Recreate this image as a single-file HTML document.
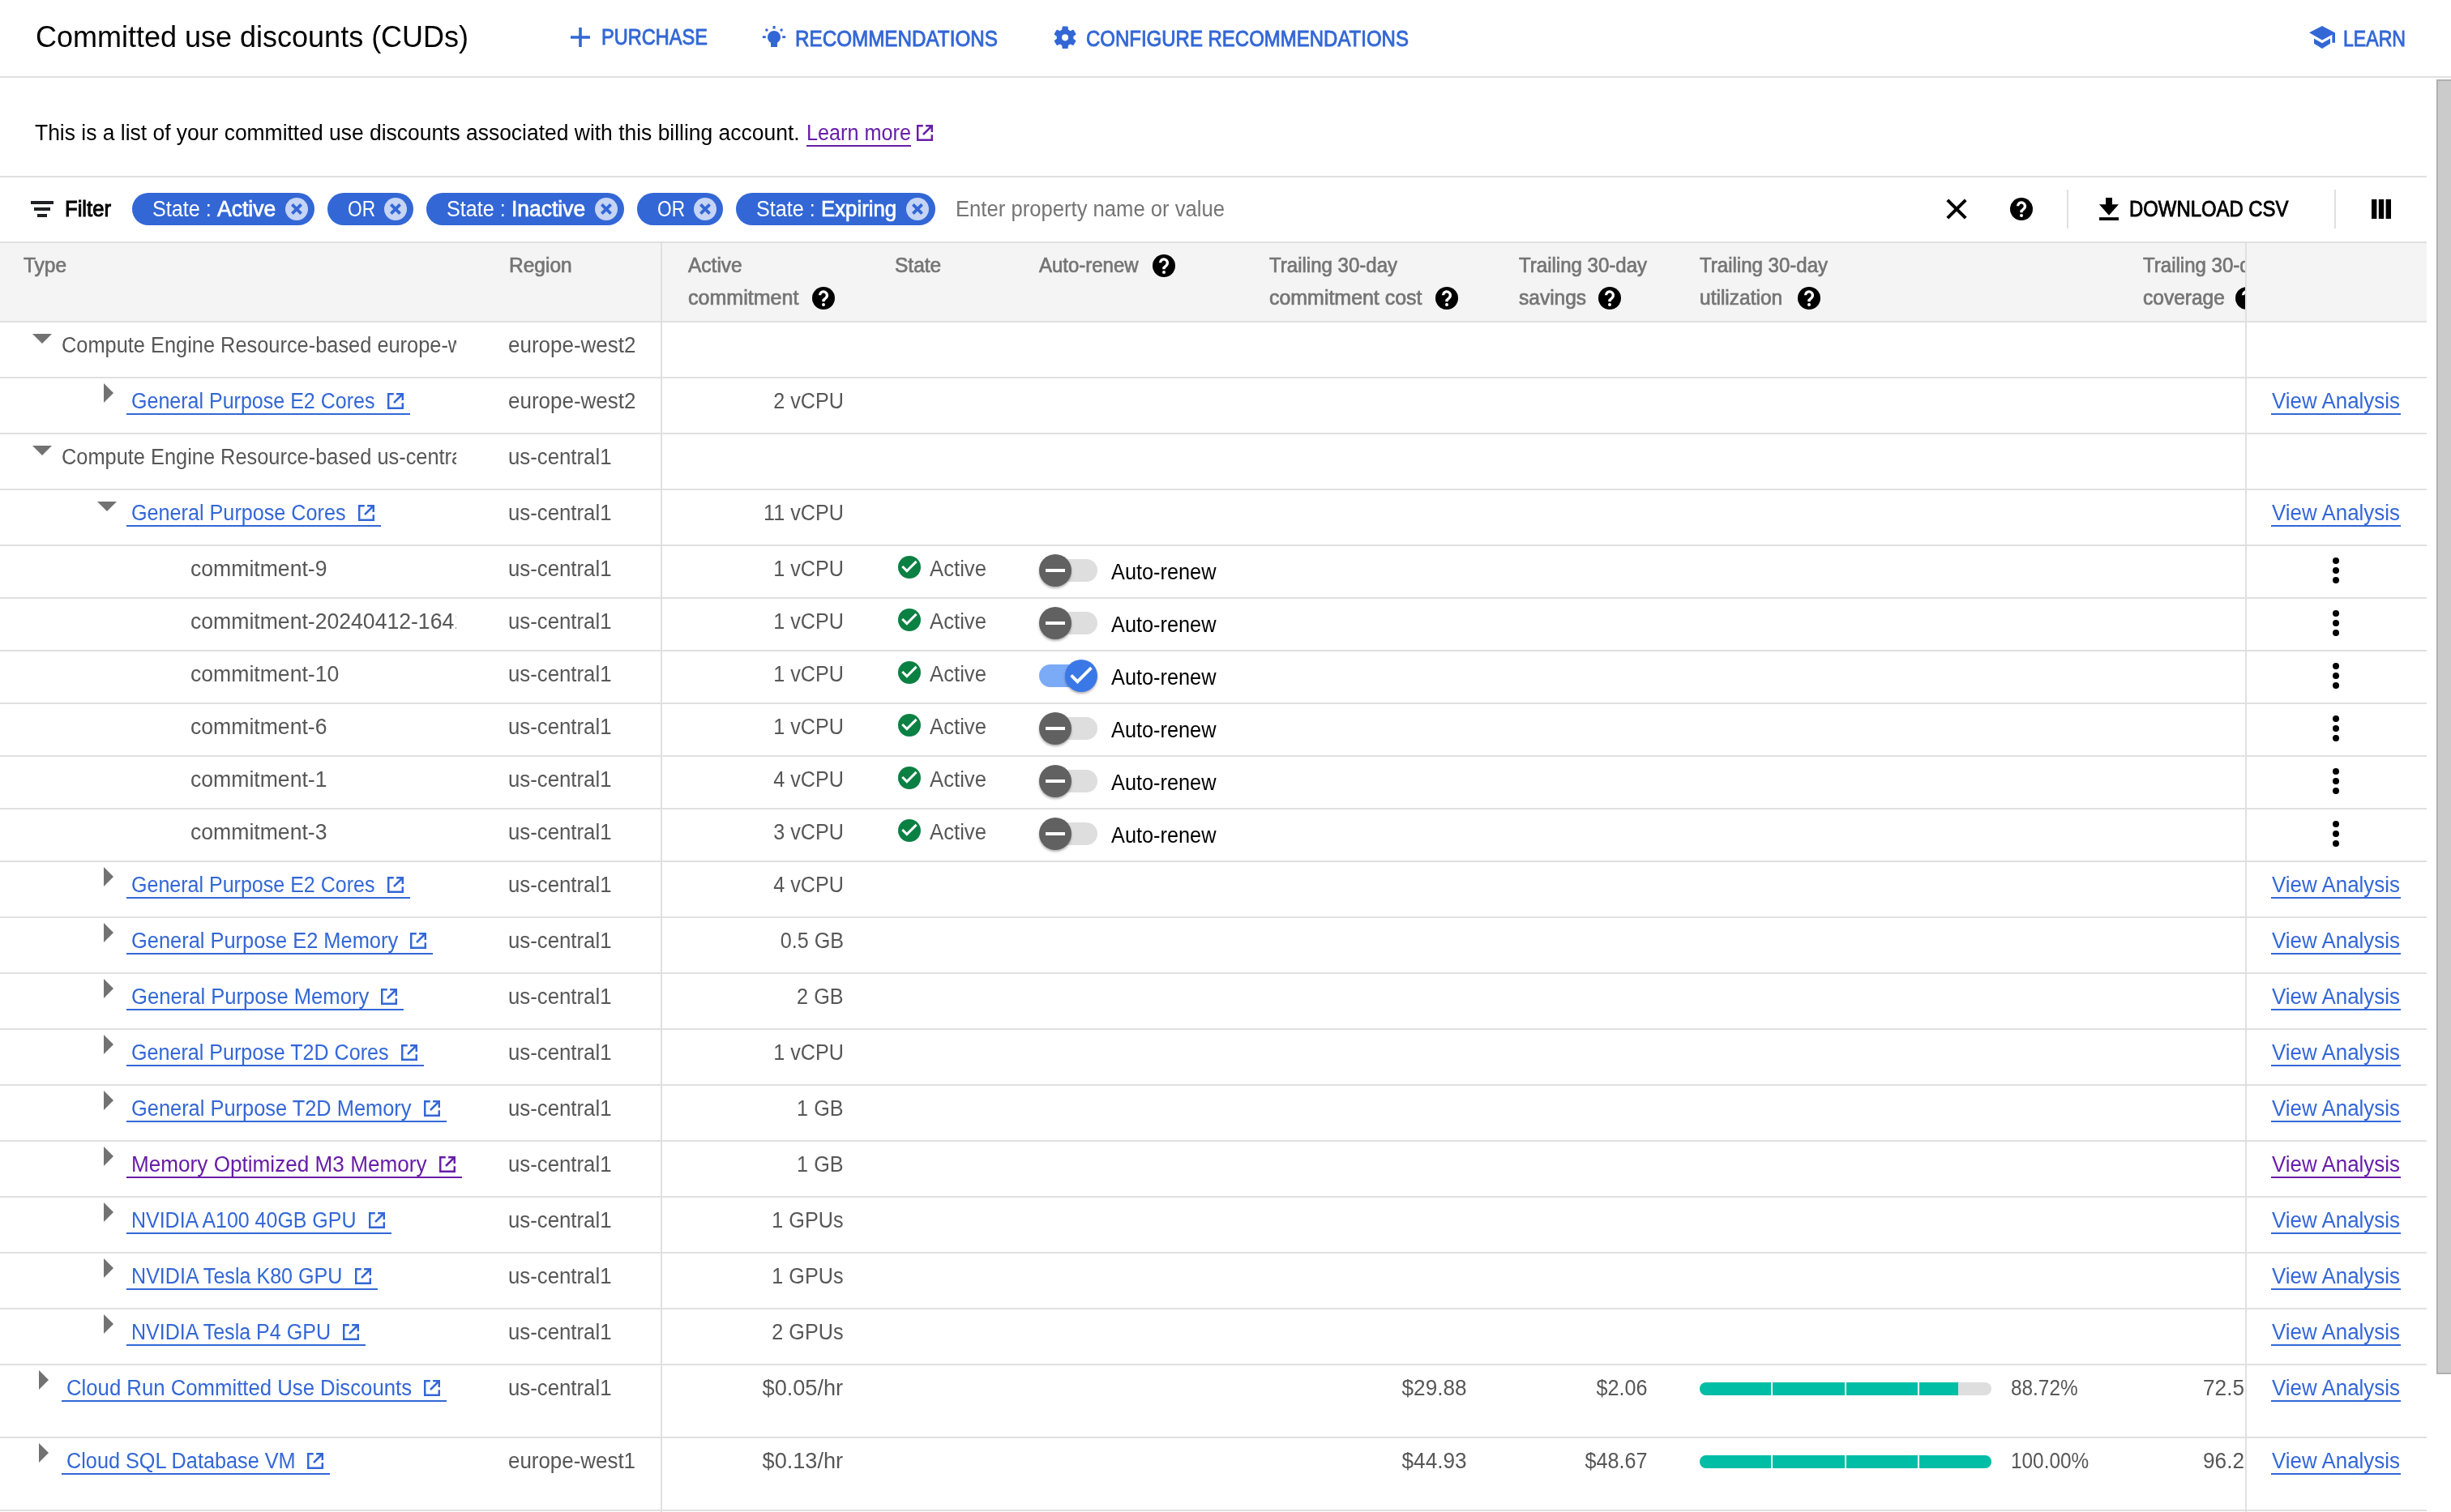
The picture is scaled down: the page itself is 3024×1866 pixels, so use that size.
<!DOCTYPE html>
<html><head><meta charset="utf-8"><style>
html,body{margin:0;padding:0;}
body{width:3024px;height:1866px;overflow:hidden;position:relative;background:#fff;font-family:"Liberation Sans",sans-serif;}
#w{position:absolute;left:0;top:0;width:3024px;height:1866px;will-change:transform;background:#fff;}
.t{position:absolute;white-space:nowrap;}
.r{position:absolute;}
svg.r{display:block;}
</style></head><body><div id="w">
<div class="t" style="left:44.00px;transform-origin:0 0;top:23.03px;font-size:36px;line-height:45.0px;color:#000000;transform:scaleX(0.9999);">Committed use discounts (CUDs)</div>
<svg class="r" style="left:704px;top:34px" width="24" height="24" viewBox="0 0 24 24"><path d="M10.2 0h3.6v10.2H24v3.6H13.8V24h-3.6V13.8H0v-3.6h10.2z" fill="#3367d6"/></svg>
<div class="t" style="left:742.00px;transform-origin:0 0;top:29.97px;font-size:27px;line-height:33.75px;color:#3367d6;-webkit-text-stroke:0.9px #3367d6;transform:scaleX(0.8730);">PURCHASE</div>
<svg class="r" style="left:940px;top:32px" width="30" height="27" viewBox="0 0 30 27"><g fill="#3367d6"><rect x="13.6" y="0" width="3" height="3.6"/><rect x="0.8" y="12.3" width="4" height="2.8"/><rect x="25.2" y="12.3" width="4" height="2.8"/><rect x="4.4" y="3.6" width="3" height="3" transform="rotate(45 5.9 5.1)"/><rect x="22.6" y="3.6" width="3" height="3" transform="rotate(45 24.1 5.1)"/><path d="M15 6A8 8 0 0 0 7 14C7 16.9 8.6 19.3 11 20.7V26H19V20.7C21.4 19.3 23 16.9 23 14A8 8 0 0 0 15 6z"/></g></svg>
<div class="t" style="left:981.40px;transform-origin:0 0;top:31.77px;font-size:27px;line-height:33.75px;color:#3367d6;-webkit-text-stroke:0.9px #3367d6;transform:scaleX(0.8972);">RECOMMENDATIONS</div>
<svg class="r" style="left:1299.8px;top:32px" width="28.2" height="28" viewBox="2.25 2 19.5 19.5"><path fill="#3367d6" d="M19.14 12.94c.04-.3.06-.61.06-.94 0-.32-.02-.64-.07-.94l2.03-1.58a.49.49 0 0 0 .12-.61l-1.92-3.32a.49.49 0 0 0-.59-.22l-2.39.96c-.5-.38-1.03-.7-1.62-.94l-.36-2.54a.48.48 0 0 0-.48-.41h-3.84c-.24 0-.43.17-.47.41l-.36 2.54c-.59.24-1.13.57-1.62.94l-2.39-.96a.48.48 0 0 0-.59.22L2.74 8.87c-.12.21-.08.47.12.61l2.03 1.58c-.05.3-.09.63-.09.94s.02.64.07.94l-2.03 1.58a.49.49 0 0 0-.12.61l1.92 3.32c.12.22.37.29.59.22l2.39-.96c.5.38 1.03.7 1.62.94l.36 2.54c.05.24.24.41.48.41h3.84c.24 0 .44-.17.47-.41l.36-2.54c.59-.24 1.13-.56 1.62-.94l2.39.96c.22.08.47 0 .59-.22l1.92-3.32c.12-.22.07-.47-.12-.61l-2.01-1.58zM12 14.8A2.8 2.8 0 1 1 12 9.2a2.8 2.8 0 0 1 0 5.6z"/></svg>
<div class="t" style="left:1339.70px;transform-origin:0 0;top:31.77px;font-size:27px;line-height:33.75px;color:#3367d6;-webkit-text-stroke:0.9px #3367d6;transform:scaleX(0.8881);">CONFIGURE RECOMMENDATIONS</div>
<svg class="r" style="left:2849px;top:32px" width="32" height="28" viewBox="0 0 32 28"><g fill="#3367d6"><path d="M0 8.3L16 0l16 8.6v12.2h-3.6V10.8L16 17.4z"/><path d="M6 15.6v6.2L16 28l10-6.2v-6.2l-10 5.7z"/></g></svg>
<div class="t" style="left:2891.00px;transform-origin:0 0;top:31.77px;font-size:27px;line-height:33.75px;color:#3367d6;-webkit-text-stroke:0.9px #3367d6;transform:scaleX(0.8551);">LEARN</div>
<div class="r" style="left:0px;top:94px;width:3024px;height:2px;background:#e0e0e0;"></div>
<div class="t" style="left:43.00px;transform-origin:0 0;top:147.77px;font-size:27px;line-height:33.75px;color:#000000;transform:scaleX(0.9794);">This is a list of your committed use discounts associated with this billing account.</div>
<div class="t" style="left:995.00px;transform-origin:0 0;top:147.77px;font-size:27px;line-height:33.75px;color:#681da8;transform:scaleX(0.9345);">Learn more</div>
<div class="r" style="left:995px;top:179px;width:129px;height:2px;background:#681da8;"></div>
<svg class="r" style="left:1131px;top:154px" width="20" height="20" viewBox="1 1 18 18"><path d="M1 1h7v2.2H3.2v13.6h13.6V12H19v7H1z M11 1h8v8h-2.2V4.8L9 12.6 7.4 11l7.8-7.8H11z" fill="#681da8"/></svg>
<div class="r" style="left:0px;top:217px;width:2994px;height:2px;background:#e0e0e0;"></div>
<svg class="r" style="left:38px;top:248px" width="28" height="20" viewBox="0 0 28 20"><g fill="#202124"><rect x="0" y="0" width="28" height="4"/><rect x="4" y="8" width="20" height="4"/><rect x="8" y="16" width="12" height="4"/></g></svg>
<div class="t" style="left:79.60px;transform-origin:0 0;top:241.77px;font-size:27px;line-height:33.75px;color:#000000;-webkit-text-stroke:1.0px #000000;transform:scaleX(0.9500);">Filter</div>
<div class="r" style="left:163px;top:238px;width:225px;height:40px;border-radius:20px;background:#3367d6"></div>
<div class="t" style="left:188.00px;transform-origin:0 0;top:241.77px;font-size:27px;line-height:33.75px;color:#fff;transform:scaleX(0.9330);">State : </div>
<div class="t" style="left:267.82px;transform-origin:0 0;top:241.77px;font-size:27px;line-height:33.75px;color:#fff;-webkit-text-stroke:0.7px #fff;transform:scaleX(0.9817);">Active</div>
<svg class="r" style="left:352px;top:244px" width="28" height="28" viewBox="0 0 28 28"><circle cx="14" cy="14" r="14" fill="#c6d4f5"/><path d="M8.4 8.4L19.6 19.6M19.6 8.4L8.4 19.6" stroke="#3367d6" stroke-width="3.8"/></svg>
<div class="r" style="left:404px;top:238px;width:106px;height:40px;border-radius:20px;background:#3367d6"></div>
<div class="t" style="left:429.00px;transform-origin:0 0;top:241.77px;font-size:27px;line-height:33.75px;color:#fff;transform:scaleX(0.8395);">OR</div>
<svg class="r" style="left:474px;top:244px" width="28" height="28" viewBox="0 0 28 28"><circle cx="14" cy="14" r="14" fill="#c6d4f5"/><path d="M8.4 8.4L19.6 19.6M19.6 8.4L8.4 19.6" stroke="#3367d6" stroke-width="3.8"/></svg>
<div class="r" style="left:526px;top:238px;width:244px;height:40px;border-radius:20px;background:#3367d6"></div>
<div class="t" style="left:551.00px;transform-origin:0 0;top:241.77px;font-size:27px;line-height:33.75px;color:#fff;transform:scaleX(0.9330);">State : </div>
<div class="t" style="left:630.82px;transform-origin:0 0;top:241.77px;font-size:27px;line-height:33.75px;color:#fff;-webkit-text-stroke:0.7px #fff;transform:scaleX(0.9800);">Inactive</div>
<svg class="r" style="left:734px;top:244px" width="28" height="28" viewBox="0 0 28 28"><circle cx="14" cy="14" r="14" fill="#c6d4f5"/><path d="M8.4 8.4L19.6 19.6M19.6 8.4L8.4 19.6" stroke="#3367d6" stroke-width="3.8"/></svg>
<div class="r" style="left:786px;top:238px;width:106px;height:40px;border-radius:20px;background:#3367d6"></div>
<div class="t" style="left:811.00px;transform-origin:0 0;top:241.77px;font-size:27px;line-height:33.75px;color:#fff;transform:scaleX(0.8395);">OR</div>
<svg class="r" style="left:856px;top:244px" width="28" height="28" viewBox="0 0 28 28"><circle cx="14" cy="14" r="14" fill="#c6d4f5"/><path d="M8.4 8.4L19.6 19.6M19.6 8.4L8.4 19.6" stroke="#3367d6" stroke-width="3.8"/></svg>
<div class="r" style="left:908px;top:238px;width:246px;height:40px;border-radius:20px;background:#3367d6"></div>
<div class="t" style="left:933.00px;transform-origin:0 0;top:241.77px;font-size:27px;line-height:33.75px;color:#fff;transform:scaleX(0.9330);">State : </div>
<div class="t" style="left:1012.82px;transform-origin:0 0;top:241.77px;font-size:27px;line-height:33.75px;color:#fff;-webkit-text-stroke:0.7px #fff;transform:scaleX(0.9553);">Expiring</div>
<svg class="r" style="left:1118px;top:244px" width="28" height="28" viewBox="0 0 28 28"><circle cx="14" cy="14" r="14" fill="#c6d4f5"/><path d="M8.4 8.4L19.6 19.6M19.6 8.4L8.4 19.6" stroke="#3367d6" stroke-width="3.8"/></svg>
<div class="t" style="left:1178.70px;transform-origin:0 0;top:241.77px;font-size:27px;line-height:33.75px;color:#757575;transform:scaleX(0.9495);">Enter property name or value</div>
<svg class="r" style="left:2401px;top:245px" width="26" height="26" viewBox="0 0 26 26"><path d="M1.8 1.8L24.2 24.2M24.2 1.8L1.8 24.2" stroke="#000" stroke-width="4"/></svg>
<svg class="r" style="left:2480px;top:244px" width="28" height="28" viewBox="0 0 28 28"><circle cx="14" cy="14" r="14" fill="#000"/><path d="M9.5 10.3A4.45 4.45 0 1 1 17.2 13.4L14 16.5V18.3" stroke="#fff" stroke-width="3.4" fill="none"/><circle cx="14" cy="22.1" r="2" fill="#fff"/></svg>
<div class="r" style="left:2550px;top:234px;width:2px;height:48px;background:#e0e0e0;"></div>
<svg class="r" style="left:2590px;top:244px" width="24" height="28" viewBox="0 0 24 28"><g fill="#000"><path d="M8 0h8v8.2H24L12 21.8 0 8.2h8z"/><rect x="0" y="24.2" width="24" height="3.8"/></g></svg>
<div class="t" style="left:2627.00px;transform-origin:0 0;top:242.27px;font-size:27px;line-height:33.75px;color:#000000;-webkit-text-stroke:0.9px #000000;transform:scaleX(0.8849);">DOWNLOAD CSV</div>
<div class="r" style="left:2880px;top:234px;width:2px;height:48px;background:#e0e0e0;"></div>
<svg class="r" style="left:2926px;top:246px" width="24" height="24" viewBox="0 0 24 24"><g fill="#000"><rect x="0" y="0" width="6.4" height="24"/><rect x="8.8" y="0" width="6.4" height="24"/><rect x="17.6" y="0" width="6.4" height="24"/></g></svg>
<div class="r" style="left:0px;top:298px;width:2994px;height:2px;background:#e0e0e0;"></div>
<div class="r" style="left:0px;top:300px;width:2994px;height:96px;background:#f4f4f4;"></div>
<div class="r" style="left:0px;top:396px;width:2994px;height:2px;background:#e0e0e0;"></div>
<div class="t" style="left:28.70px;transform-origin:0 0;top:311.71px;font-size:25px;line-height:31.25px;color:#757575;-webkit-text-stroke:0.7px #757575;transform:scaleX(0.9800);">Type</div>
<div class="t" style="left:628.00px;transform-origin:0 0;top:311.71px;font-size:25px;line-height:31.25px;color:#757575;-webkit-text-stroke:0.7px #757575;transform:scaleX(0.9800);">Region</div>
<div class="t" style="left:849.00px;transform-origin:0 0;top:311.71px;font-size:25px;line-height:31.25px;color:#757575;-webkit-text-stroke:0.7px #757575;transform:scaleX(0.9798);">Active</div>
<div class="t" style="left:849.00px;transform-origin:0 0;top:351.71px;font-size:25px;line-height:31.25px;color:#757575;-webkit-text-stroke:0.7px #757575;transform:scaleX(1.0018);">commitment</div>
<svg class="r" style="left:1002px;top:354px" width="28" height="28" viewBox="0 0 28 28"><circle cx="14" cy="14" r="14" fill="#000"/><path d="M9.5 10.3A4.45 4.45 0 1 1 17.2 13.4L14 16.5V18.3" stroke="#fff" stroke-width="3.4" fill="none"/><circle cx="14" cy="22.1" r="2" fill="#fff"/></svg>
<div class="t" style="left:1104.00px;transform-origin:0 0;top:311.71px;font-size:25px;line-height:31.25px;color:#757575;-webkit-text-stroke:0.7px #757575;transform:scaleX(0.9800);">State</div>
<div class="t" style="left:1282.00px;transform-origin:0 0;top:311.71px;font-size:25px;line-height:31.25px;color:#757575;-webkit-text-stroke:0.7px #757575;transform:scaleX(0.9589);">Auto-renew</div>
<svg class="r" style="left:1422px;top:314px" width="28" height="28" viewBox="0 0 28 28"><circle cx="14" cy="14" r="14" fill="#000"/><path d="M9.5 10.3A4.45 4.45 0 1 1 17.2 13.4L14 16.5V18.3" stroke="#fff" stroke-width="3.4" fill="none"/><circle cx="14" cy="22.1" r="2" fill="#fff"/></svg>
<div class="t" style="left:1566.00px;transform-origin:0 0;top:311.71px;font-size:25px;line-height:31.25px;color:#757575;-webkit-text-stroke:0.7px #757575;transform:scaleX(0.9609);">Trailing 30-day</div>
<div class="t" style="left:1566.00px;transform-origin:0 0;top:351.71px;font-size:25px;line-height:31.25px;color:#757575;-webkit-text-stroke:0.7px #757575;transform:scaleX(0.9975);">commitment cost</div>
<svg class="r" style="left:1771px;top:354px" width="28" height="28" viewBox="0 0 28 28"><circle cx="14" cy="14" r="14" fill="#000"/><path d="M9.5 10.3A4.45 4.45 0 1 1 17.2 13.4L14 16.5V18.3" stroke="#fff" stroke-width="3.4" fill="none"/><circle cx="14" cy="22.1" r="2" fill="#fff"/></svg>
<div class="t" style="left:1874.00px;transform-origin:0 0;top:311.71px;font-size:25px;line-height:31.25px;color:#757575;-webkit-text-stroke:0.7px #757575;transform:scaleX(0.9609);">Trailing 30-day</div>
<div class="t" style="left:1874.00px;transform-origin:0 0;top:351.71px;font-size:25px;line-height:31.25px;color:#757575;-webkit-text-stroke:0.7px #757575;transform:scaleX(0.9800);">savings</div>
<svg class="r" style="left:1972px;top:354px" width="28" height="28" viewBox="0 0 28 28"><circle cx="14" cy="14" r="14" fill="#000"/><path d="M9.5 10.3A4.45 4.45 0 1 1 17.2 13.4L14 16.5V18.3" stroke="#fff" stroke-width="3.4" fill="none"/><circle cx="14" cy="22.1" r="2" fill="#fff"/></svg>
<div class="t" style="left:2097.00px;transform-origin:0 0;top:311.71px;font-size:25px;line-height:31.25px;color:#757575;-webkit-text-stroke:0.7px #757575;transform:scaleX(0.9609);">Trailing 30-day</div>
<div class="t" style="left:2097.00px;transform-origin:0 0;top:351.71px;font-size:25px;line-height:31.25px;color:#757575;-webkit-text-stroke:0.7px #757575;transform:scaleX(0.9800);">utilization</div>
<svg class="r" style="left:2218px;top:354px" width="28" height="28" viewBox="0 0 28 28"><circle cx="14" cy="14" r="14" fill="#000"/><path d="M9.5 10.3A4.45 4.45 0 1 1 17.2 13.4L14 16.5V18.3" stroke="#fff" stroke-width="3.4" fill="none"/><circle cx="14" cy="22.1" r="2" fill="#fff"/></svg>
<div class="r" style="left:2600px;top:300px;width:170px;height:96px;overflow:hidden">
<div class="t" style="left:44.00px;transform-origin:0 0;top:11.71px;font-size:25px;line-height:31.25px;color:#757575;-webkit-text-stroke:0.7px #757575;transform:scaleX(0.9609);">Trailing 30-day</div>
<div class="t" style="left:44.00px;transform-origin:0 0;top:51.71px;font-size:25px;line-height:31.25px;color:#757575;-webkit-text-stroke:0.7px #757575;transform:scaleX(0.9800);">coverage</div>
<svg class="r" style="left:158px;top:54px" width="28" height="28" viewBox="0 0 28 28"><circle cx="14" cy="14" r="14" fill="#000"/><path d="M9.5 10.3A4.45 4.45 0 1 1 17.2 13.4L14 16.5V18.3" stroke="#fff" stroke-width="3.4" fill="none"/><circle cx="14" cy="22.1" r="2" fill="#fff"/></svg>
</div>
<div class="r" style="left:0px;top:465px;width:2994px;height:2px;background:#e0e0e0;"></div>
<div class="r" style="left:0px;top:534px;width:2994px;height:2px;background:#e0e0e0;"></div>
<div class="r" style="left:0px;top:603px;width:2994px;height:2px;background:#e0e0e0;"></div>
<div class="r" style="left:0px;top:672px;width:2994px;height:2px;background:#e0e0e0;"></div>
<div class="r" style="left:0px;top:737px;width:2994px;height:2px;background:#e0e0e0;"></div>
<div class="r" style="left:0px;top:802px;width:2994px;height:2px;background:#e0e0e0;"></div>
<div class="r" style="left:0px;top:867px;width:2994px;height:2px;background:#e0e0e0;"></div>
<div class="r" style="left:0px;top:932px;width:2994px;height:2px;background:#e0e0e0;"></div>
<div class="r" style="left:0px;top:997px;width:2994px;height:2px;background:#e0e0e0;"></div>
<div class="r" style="left:0px;top:1062px;width:2994px;height:2px;background:#e0e0e0;"></div>
<div class="r" style="left:0px;top:1131px;width:2994px;height:2px;background:#e0e0e0;"></div>
<div class="r" style="left:0px;top:1200px;width:2994px;height:2px;background:#e0e0e0;"></div>
<div class="r" style="left:0px;top:1269px;width:2994px;height:2px;background:#e0e0e0;"></div>
<div class="r" style="left:0px;top:1338px;width:2994px;height:2px;background:#e0e0e0;"></div>
<div class="r" style="left:0px;top:1407px;width:2994px;height:2px;background:#e0e0e0;"></div>
<div class="r" style="left:0px;top:1476px;width:2994px;height:2px;background:#e0e0e0;"></div>
<div class="r" style="left:0px;top:1545px;width:2994px;height:2px;background:#e0e0e0;"></div>
<div class="r" style="left:0px;top:1614px;width:2994px;height:2px;background:#e0e0e0;"></div>
<div class="r" style="left:0px;top:1683px;width:2994px;height:2px;background:#e0e0e0;"></div>
<div class="r" style="left:0px;top:1773px;width:2994px;height:2px;background:#e0e0e0;"></div>
<div class="r" style="left:0px;top:1863px;width:2994px;height:2px;background:#e0e0e0;"></div>
<svg class="r" style="left:40px;top:412px" width="24" height="12" viewBox="0 0 24 12"><path d="M0 0h24L12 12z" fill="#727272"/></svg>
<div class="r" style="left:60px;top:396px;width:503px;height:60px;overflow:hidden">
<div class="t" style="left:15.50px;transform-origin:0 0;top:13.77px;font-size:27px;line-height:33.75px;color:#575757;transform:scaleX(0.9400);">Compute Engine Resource-based europe-west2</div>
</div>
<div class="t" style="left:627.30px;transform-origin:0 0;top:409.77px;font-size:27px;line-height:33.75px;color:#575757;transform:scaleX(0.9628);">europe-west2</div>
<svg class="r" style="left:128px;top:473px" width="12" height="24" viewBox="0 0 12 24"><path d="M0 0l12 12L0 24z" fill="#727272"/></svg>
<div class="t" style="left:162.00px;transform-origin:0 0;top:478.77px;font-size:27px;line-height:33.75px;color:#3367d6;transform:scaleX(0.9270);">General Purpose E2 Cores</div>
<svg class="r" style="left:477.7px;top:485px" width="20" height="20" viewBox="1 1 18 18"><path d="M1 1h7v2.2H3.2v13.6h13.6V12H19v7H1z M11 1h8v8h-2.2V4.8L9 12.6 7.4 11l7.8-7.8H11z" fill="#3367d6"/></svg>
<div class="r" style="left:156px;top:510px;width:349.7px;height:2px;background:#3367d6;"></div>
<div class="t" style="left:627.30px;transform-origin:0 0;top:478.77px;font-size:27px;line-height:33.75px;color:#575757;transform:scaleX(0.9628);">europe-west2</div>
<div class="t" style="right:1983.00px;transform-origin:100% 0;top:478.77px;font-size:27px;line-height:33.75px;color:#575757;transform:scaleX(0.9330);">2 vCPU</div>
<div class="t" style="left:2803.00px;transform-origin:0 0;top:478.77px;font-size:27px;line-height:33.75px;color:#3367d6;transform:scaleX(0.9598);">View Analysis</div>
<div class="r" style="left:2802px;top:510px;width:160px;height:2px;background:#3367d6;"></div>
<svg class="r" style="left:40px;top:550px" width="24" height="12" viewBox="0 0 24 12"><path d="M0 0h24L12 12z" fill="#727272"/></svg>
<div class="r" style="left:60px;top:534px;width:503px;height:60px;overflow:hidden">
<div class="t" style="left:15.50px;transform-origin:0 0;top:13.77px;font-size:27px;line-height:33.75px;color:#575757;transform:scaleX(0.9400);">Compute Engine Resource-based us-central1</div>
</div>
<div class="t" style="left:627.30px;transform-origin:0 0;top:547.77px;font-size:27px;line-height:33.75px;color:#575757;transform:scaleX(0.9547);">us-central1</div>
<svg class="r" style="left:120px;top:619px" width="24" height="12" viewBox="0 0 24 12"><path d="M0 0h24L12 12z" fill="#727272"/></svg>
<div class="t" style="left:162.00px;transform-origin:0 0;top:616.77px;font-size:27px;line-height:33.75px;color:#3367d6;transform:scaleX(0.9326);">General Purpose Cores</div>
<svg class="r" style="left:441.7px;top:623px" width="20" height="20" viewBox="1 1 18 18"><path d="M1 1h7v2.2H3.2v13.6h13.6V12H19v7H1z M11 1h8v8h-2.2V4.8L9 12.6 7.4 11l7.8-7.8H11z" fill="#3367d6"/></svg>
<div class="r" style="left:156px;top:648px;width:313.7px;height:2px;background:#3367d6;"></div>
<div class="t" style="left:627.30px;transform-origin:0 0;top:616.77px;font-size:27px;line-height:33.75px;color:#575757;transform:scaleX(0.9547);">us-central1</div>
<div class="t" style="right:1983.00px;transform-origin:100% 0;top:616.77px;font-size:27px;line-height:33.75px;color:#575757;transform:scaleX(0.9330);">11 vCPU</div>
<div class="t" style="left:2803.00px;transform-origin:0 0;top:616.77px;font-size:27px;line-height:33.75px;color:#3367d6;transform:scaleX(0.9598);">View Analysis</div>
<div class="r" style="left:2802px;top:648px;width:160px;height:2px;background:#3367d6;"></div>
<div class="r" style="left:200px;top:672px;width:363px;height:60px;overflow:hidden">
<div class="t" style="left:35.00px;transform-origin:0 0;top:13.77px;font-size:27px;line-height:33.75px;color:#575757;transform:scaleX(0.9850);">commitment-9</div>
</div>
<div class="t" style="left:627.30px;transform-origin:0 0;top:685.77px;font-size:27px;line-height:33.75px;color:#575757;transform:scaleX(0.9547);">us-central1</div>
<div class="t" style="right:1983.00px;transform-origin:100% 0;top:685.77px;font-size:27px;line-height:33.75px;color:#575757;transform:scaleX(0.9330);">1 vCPU</div>
<svg class="r" style="left:1108px;top:686px" width="28" height="28" viewBox="0 0 28 28"><circle cx="14" cy="14" r="14" fill="#0b8043"/><path d="M5.3 13L10.9 18.6L22.6 6.9" stroke="#fff" stroke-width="3" fill="none"/></svg>
<div class="t" style="left:1147.00px;transform-origin:0 0;top:685.57px;font-size:27px;line-height:33.75px;color:#575757;transform:scaleX(0.9520);">Active</div>
<div class="r" style="left:1286px;top:690px;width:68px;height:28px;background:#dedede;border-radius:14px;"></div>
<div class="r" style="left:1282px;top:684px;width:40px;height:40px;border-radius:20px;background:#616161;box-shadow:0 2px 3px rgba(0,0,0,.3)"></div>
<div class="r" style="left:1290px;top:702px;width:24px;height:4px;background:#fff;"></div>
<div class="t" style="left:1371.00px;transform-origin:0 0;top:689.77px;font-size:27px;line-height:33.75px;color:#000000;transform:scaleX(0.9373);">Auto-renew</div>
<div class="r" style="left:2878px;top:688px;width:8px;height:8px;border-radius:4px;background:#000"></div>
<div class="r" style="left:2878px;top:700px;width:8px;height:8px;border-radius:4px;background:#000"></div>
<div class="r" style="left:2878px;top:712px;width:8px;height:8px;border-radius:4px;background:#000"></div>
<div class="r" style="left:200px;top:737px;width:363px;height:60px;overflow:hidden">
<div class="t" style="left:35.00px;transform-origin:0 0;top:13.77px;font-size:27px;line-height:33.75px;color:#575757;transform:scaleX(0.9850);">commitment-20240412-164129</div>
</div>
<div class="t" style="left:627.30px;transform-origin:0 0;top:750.77px;font-size:27px;line-height:33.75px;color:#575757;transform:scaleX(0.9547);">us-central1</div>
<div class="t" style="right:1983.00px;transform-origin:100% 0;top:750.77px;font-size:27px;line-height:33.75px;color:#575757;transform:scaleX(0.9330);">1 vCPU</div>
<svg class="r" style="left:1108px;top:751px" width="28" height="28" viewBox="0 0 28 28"><circle cx="14" cy="14" r="14" fill="#0b8043"/><path d="M5.3 13L10.9 18.6L22.6 6.9" stroke="#fff" stroke-width="3" fill="none"/></svg>
<div class="t" style="left:1147.00px;transform-origin:0 0;top:750.57px;font-size:27px;line-height:33.75px;color:#575757;transform:scaleX(0.9520);">Active</div>
<div class="r" style="left:1286px;top:755px;width:68px;height:28px;background:#dedede;border-radius:14px;"></div>
<div class="r" style="left:1282px;top:749px;width:40px;height:40px;border-radius:20px;background:#616161;box-shadow:0 2px 3px rgba(0,0,0,.3)"></div>
<div class="r" style="left:1290px;top:767px;width:24px;height:4px;background:#fff;"></div>
<div class="t" style="left:1371.00px;transform-origin:0 0;top:754.77px;font-size:27px;line-height:33.75px;color:#000000;transform:scaleX(0.9373);">Auto-renew</div>
<div class="r" style="left:2878px;top:753px;width:8px;height:8px;border-radius:4px;background:#000"></div>
<div class="r" style="left:2878px;top:765px;width:8px;height:8px;border-radius:4px;background:#000"></div>
<div class="r" style="left:2878px;top:777px;width:8px;height:8px;border-radius:4px;background:#000"></div>
<div class="r" style="left:200px;top:802px;width:363px;height:60px;overflow:hidden">
<div class="t" style="left:35.00px;transform-origin:0 0;top:13.77px;font-size:27px;line-height:33.75px;color:#575757;transform:scaleX(0.9850);">commitment-10</div>
</div>
<div class="t" style="left:627.30px;transform-origin:0 0;top:815.77px;font-size:27px;line-height:33.75px;color:#575757;transform:scaleX(0.9547);">us-central1</div>
<div class="t" style="right:1983.00px;transform-origin:100% 0;top:815.77px;font-size:27px;line-height:33.75px;color:#575757;transform:scaleX(0.9330);">1 vCPU</div>
<svg class="r" style="left:1108px;top:816px" width="28" height="28" viewBox="0 0 28 28"><circle cx="14" cy="14" r="14" fill="#0b8043"/><path d="M5.3 13L10.9 18.6L22.6 6.9" stroke="#fff" stroke-width="3" fill="none"/></svg>
<div class="t" style="left:1147.00px;transform-origin:0 0;top:815.57px;font-size:27px;line-height:33.75px;color:#575757;transform:scaleX(0.9520);">Active</div>
<div class="r" style="left:1282px;top:820px;width:68px;height:28px;background:#7baaf7;border-radius:14px;"></div>
<div class="r" style="left:1314px;top:814px;width:40px;height:40px;border-radius:20px;background:#3b78e7;box-shadow:0 2px 3px rgba(0,0,0,.3)"></div>
<svg class="r" style="left:1314px;top:814px" width="40" height="40" viewBox="0 0 40 40"><path d="M7.6 19.4L15.4 27.2L32.4 10.2" stroke="#fff" stroke-width="3.8" fill="none"/></svg>
<div class="t" style="left:1371.00px;transform-origin:0 0;top:819.77px;font-size:27px;line-height:33.75px;color:#000000;transform:scaleX(0.9373);">Auto-renew</div>
<div class="r" style="left:2878px;top:818px;width:8px;height:8px;border-radius:4px;background:#000"></div>
<div class="r" style="left:2878px;top:830px;width:8px;height:8px;border-radius:4px;background:#000"></div>
<div class="r" style="left:2878px;top:842px;width:8px;height:8px;border-radius:4px;background:#000"></div>
<div class="r" style="left:200px;top:867px;width:363px;height:60px;overflow:hidden">
<div class="t" style="left:35.00px;transform-origin:0 0;top:13.77px;font-size:27px;line-height:33.75px;color:#575757;transform:scaleX(0.9850);">commitment-6</div>
</div>
<div class="t" style="left:627.30px;transform-origin:0 0;top:880.77px;font-size:27px;line-height:33.75px;color:#575757;transform:scaleX(0.9547);">us-central1</div>
<div class="t" style="right:1983.00px;transform-origin:100% 0;top:880.77px;font-size:27px;line-height:33.75px;color:#575757;transform:scaleX(0.9330);">1 vCPU</div>
<svg class="r" style="left:1108px;top:881px" width="28" height="28" viewBox="0 0 28 28"><circle cx="14" cy="14" r="14" fill="#0b8043"/><path d="M5.3 13L10.9 18.6L22.6 6.9" stroke="#fff" stroke-width="3" fill="none"/></svg>
<div class="t" style="left:1147.00px;transform-origin:0 0;top:880.57px;font-size:27px;line-height:33.75px;color:#575757;transform:scaleX(0.9520);">Active</div>
<div class="r" style="left:1286px;top:885px;width:68px;height:28px;background:#dedede;border-radius:14px;"></div>
<div class="r" style="left:1282px;top:879px;width:40px;height:40px;border-radius:20px;background:#616161;box-shadow:0 2px 3px rgba(0,0,0,.3)"></div>
<div class="r" style="left:1290px;top:897px;width:24px;height:4px;background:#fff;"></div>
<div class="t" style="left:1371.00px;transform-origin:0 0;top:884.77px;font-size:27px;line-height:33.75px;color:#000000;transform:scaleX(0.9373);">Auto-renew</div>
<div class="r" style="left:2878px;top:883px;width:8px;height:8px;border-radius:4px;background:#000"></div>
<div class="r" style="left:2878px;top:895px;width:8px;height:8px;border-radius:4px;background:#000"></div>
<div class="r" style="left:2878px;top:907px;width:8px;height:8px;border-radius:4px;background:#000"></div>
<div class="r" style="left:200px;top:932px;width:363px;height:60px;overflow:hidden">
<div class="t" style="left:35.00px;transform-origin:0 0;top:13.77px;font-size:27px;line-height:33.75px;color:#575757;transform:scaleX(0.9850);">commitment-1</div>
</div>
<div class="t" style="left:627.30px;transform-origin:0 0;top:945.77px;font-size:27px;line-height:33.75px;color:#575757;transform:scaleX(0.9547);">us-central1</div>
<div class="t" style="right:1983.00px;transform-origin:100% 0;top:945.77px;font-size:27px;line-height:33.75px;color:#575757;transform:scaleX(0.9330);">4 vCPU</div>
<svg class="r" style="left:1108px;top:946px" width="28" height="28" viewBox="0 0 28 28"><circle cx="14" cy="14" r="14" fill="#0b8043"/><path d="M5.3 13L10.9 18.6L22.6 6.9" stroke="#fff" stroke-width="3" fill="none"/></svg>
<div class="t" style="left:1147.00px;transform-origin:0 0;top:945.57px;font-size:27px;line-height:33.75px;color:#575757;transform:scaleX(0.9520);">Active</div>
<div class="r" style="left:1286px;top:950px;width:68px;height:28px;background:#dedede;border-radius:14px;"></div>
<div class="r" style="left:1282px;top:944px;width:40px;height:40px;border-radius:20px;background:#616161;box-shadow:0 2px 3px rgba(0,0,0,.3)"></div>
<div class="r" style="left:1290px;top:962px;width:24px;height:4px;background:#fff;"></div>
<div class="t" style="left:1371.00px;transform-origin:0 0;top:949.77px;font-size:27px;line-height:33.75px;color:#000000;transform:scaleX(0.9373);">Auto-renew</div>
<div class="r" style="left:2878px;top:948px;width:8px;height:8px;border-radius:4px;background:#000"></div>
<div class="r" style="left:2878px;top:960px;width:8px;height:8px;border-radius:4px;background:#000"></div>
<div class="r" style="left:2878px;top:972px;width:8px;height:8px;border-radius:4px;background:#000"></div>
<div class="r" style="left:200px;top:997px;width:363px;height:60px;overflow:hidden">
<div class="t" style="left:35.00px;transform-origin:0 0;top:13.77px;font-size:27px;line-height:33.75px;color:#575757;transform:scaleX(0.9850);">commitment-3</div>
</div>
<div class="t" style="left:627.30px;transform-origin:0 0;top:1010.77px;font-size:27px;line-height:33.75px;color:#575757;transform:scaleX(0.9547);">us-central1</div>
<div class="t" style="right:1983.00px;transform-origin:100% 0;top:1010.77px;font-size:27px;line-height:33.75px;color:#575757;transform:scaleX(0.9330);">3 vCPU</div>
<svg class="r" style="left:1108px;top:1011px" width="28" height="28" viewBox="0 0 28 28"><circle cx="14" cy="14" r="14" fill="#0b8043"/><path d="M5.3 13L10.9 18.6L22.6 6.9" stroke="#fff" stroke-width="3" fill="none"/></svg>
<div class="t" style="left:1147.00px;transform-origin:0 0;top:1010.57px;font-size:27px;line-height:33.75px;color:#575757;transform:scaleX(0.9520);">Active</div>
<div class="r" style="left:1286px;top:1015px;width:68px;height:28px;background:#dedede;border-radius:14px;"></div>
<div class="r" style="left:1282px;top:1009px;width:40px;height:40px;border-radius:20px;background:#616161;box-shadow:0 2px 3px rgba(0,0,0,.3)"></div>
<div class="r" style="left:1290px;top:1027px;width:24px;height:4px;background:#fff;"></div>
<div class="t" style="left:1371.00px;transform-origin:0 0;top:1014.77px;font-size:27px;line-height:33.75px;color:#000000;transform:scaleX(0.9373);">Auto-renew</div>
<div class="r" style="left:2878px;top:1013px;width:8px;height:8px;border-radius:4px;background:#000"></div>
<div class="r" style="left:2878px;top:1025px;width:8px;height:8px;border-radius:4px;background:#000"></div>
<div class="r" style="left:2878px;top:1037px;width:8px;height:8px;border-radius:4px;background:#000"></div>
<svg class="r" style="left:128px;top:1070px" width="12" height="24" viewBox="0 0 12 24"><path d="M0 0l12 12L0 24z" fill="#727272"/></svg>
<div class="t" style="left:162.00px;transform-origin:0 0;top:1075.77px;font-size:27px;line-height:33.75px;color:#3367d6;transform:scaleX(0.9270);">General Purpose E2 Cores</div>
<svg class="r" style="left:477.7px;top:1082px" width="20" height="20" viewBox="1 1 18 18"><path d="M1 1h7v2.2H3.2v13.6h13.6V12H19v7H1z M11 1h8v8h-2.2V4.8L9 12.6 7.4 11l7.8-7.8H11z" fill="#3367d6"/></svg>
<div class="r" style="left:156px;top:1107px;width:349.7px;height:2px;background:#3367d6;"></div>
<div class="t" style="left:627.30px;transform-origin:0 0;top:1075.77px;font-size:27px;line-height:33.75px;color:#575757;transform:scaleX(0.9547);">us-central1</div>
<div class="t" style="right:1983.00px;transform-origin:100% 0;top:1075.77px;font-size:27px;line-height:33.75px;color:#575757;transform:scaleX(0.9330);">4 vCPU</div>
<div class="t" style="left:2803.00px;transform-origin:0 0;top:1075.77px;font-size:27px;line-height:33.75px;color:#3367d6;transform:scaleX(0.9598);">View Analysis</div>
<div class="r" style="left:2802px;top:1107px;width:160px;height:2px;background:#3367d6;"></div>
<svg class="r" style="left:128px;top:1139px" width="12" height="24" viewBox="0 0 12 24"><path d="M0 0l12 12L0 24z" fill="#727272"/></svg>
<div class="t" style="left:162.00px;transform-origin:0 0;top:1144.77px;font-size:27px;line-height:33.75px;color:#3367d6;transform:scaleX(0.9413);">General Purpose E2 Memory</div>
<svg class="r" style="left:506.3px;top:1151px" width="20" height="20" viewBox="1 1 18 18"><path d="M1 1h7v2.2H3.2v13.6h13.6V12H19v7H1z M11 1h8v8h-2.2V4.8L9 12.6 7.4 11l7.8-7.8H11z" fill="#3367d6"/></svg>
<div class="r" style="left:156px;top:1176px;width:378.29999999999995px;height:2px;background:#3367d6;"></div>
<div class="t" style="left:627.30px;transform-origin:0 0;top:1144.77px;font-size:27px;line-height:33.75px;color:#575757;transform:scaleX(0.9547);">us-central1</div>
<div class="t" style="right:1983.00px;transform-origin:100% 0;top:1144.77px;font-size:27px;line-height:33.75px;color:#575757;transform:scaleX(0.9330);">0.5 GB</div>
<div class="t" style="left:2803.00px;transform-origin:0 0;top:1144.77px;font-size:27px;line-height:33.75px;color:#3367d6;transform:scaleX(0.9598);">View Analysis</div>
<div class="r" style="left:2802px;top:1176px;width:160px;height:2px;background:#3367d6;"></div>
<svg class="r" style="left:128px;top:1208px" width="12" height="24" viewBox="0 0 12 24"><path d="M0 0l12 12L0 24z" fill="#727272"/></svg>
<div class="t" style="left:162.00px;transform-origin:0 0;top:1213.77px;font-size:27px;line-height:33.75px;color:#3367d6;transform:scaleX(0.9486);">General Purpose Memory</div>
<svg class="r" style="left:470.4px;top:1220px" width="20" height="20" viewBox="1 1 18 18"><path d="M1 1h7v2.2H3.2v13.6h13.6V12H19v7H1z M11 1h8v8h-2.2V4.8L9 12.6 7.4 11l7.8-7.8H11z" fill="#3367d6"/></svg>
<div class="r" style="left:156px;top:1245px;width:342.4px;height:2px;background:#3367d6;"></div>
<div class="t" style="left:627.30px;transform-origin:0 0;top:1213.77px;font-size:27px;line-height:33.75px;color:#575757;transform:scaleX(0.9547);">us-central1</div>
<div class="t" style="right:1983.00px;transform-origin:100% 0;top:1213.77px;font-size:27px;line-height:33.75px;color:#575757;transform:scaleX(0.9330);">2 GB</div>
<div class="t" style="left:2803.00px;transform-origin:0 0;top:1213.77px;font-size:27px;line-height:33.75px;color:#3367d6;transform:scaleX(0.9598);">View Analysis</div>
<div class="r" style="left:2802px;top:1245px;width:160px;height:2px;background:#3367d6;"></div>
<svg class="r" style="left:128px;top:1277px" width="12" height="24" viewBox="0 0 12 24"><path d="M0 0l12 12L0 24z" fill="#727272"/></svg>
<div class="t" style="left:162.00px;transform-origin:0 0;top:1282.77px;font-size:27px;line-height:33.75px;color:#3367d6;transform:scaleX(0.9293);">General Purpose T2D Cores</div>
<svg class="r" style="left:494.7px;top:1289px" width="20" height="20" viewBox="1 1 18 18"><path d="M1 1h7v2.2H3.2v13.6h13.6V12H19v7H1z M11 1h8v8h-2.2V4.8L9 12.6 7.4 11l7.8-7.8H11z" fill="#3367d6"/></svg>
<div class="r" style="left:156px;top:1314px;width:366.70000000000005px;height:2px;background:#3367d6;"></div>
<div class="t" style="left:627.30px;transform-origin:0 0;top:1282.77px;font-size:27px;line-height:33.75px;color:#575757;transform:scaleX(0.9547);">us-central1</div>
<div class="t" style="right:1983.00px;transform-origin:100% 0;top:1282.77px;font-size:27px;line-height:33.75px;color:#575757;transform:scaleX(0.9330);">1 vCPU</div>
<div class="t" style="left:2803.00px;transform-origin:0 0;top:1282.77px;font-size:27px;line-height:33.75px;color:#3367d6;transform:scaleX(0.9598);">View Analysis</div>
<div class="r" style="left:2802px;top:1314px;width:160px;height:2px;background:#3367d6;"></div>
<svg class="r" style="left:128px;top:1346px" width="12" height="24" viewBox="0 0 12 24"><path d="M0 0l12 12L0 24z" fill="#727272"/></svg>
<div class="t" style="left:162.00px;transform-origin:0 0;top:1351.77px;font-size:27px;line-height:33.75px;color:#3367d6;transform:scaleX(0.9411);">General Purpose T2D Memory</div>
<svg class="r" style="left:522.7px;top:1358px" width="20" height="20" viewBox="1 1 18 18"><path d="M1 1h7v2.2H3.2v13.6h13.6V12H19v7H1z M11 1h8v8h-2.2V4.8L9 12.6 7.4 11l7.8-7.8H11z" fill="#3367d6"/></svg>
<div class="r" style="left:156px;top:1383px;width:394.70000000000005px;height:2px;background:#3367d6;"></div>
<div class="t" style="left:627.30px;transform-origin:0 0;top:1351.77px;font-size:27px;line-height:33.75px;color:#575757;transform:scaleX(0.9547);">us-central1</div>
<div class="t" style="right:1983.00px;transform-origin:100% 0;top:1351.77px;font-size:27px;line-height:33.75px;color:#575757;transform:scaleX(0.9330);">1 GB</div>
<div class="t" style="left:2803.00px;transform-origin:0 0;top:1351.77px;font-size:27px;line-height:33.75px;color:#3367d6;transform:scaleX(0.9598);">View Analysis</div>
<div class="r" style="left:2802px;top:1383px;width:160px;height:2px;background:#3367d6;"></div>
<svg class="r" style="left:128px;top:1415px" width="12" height="24" viewBox="0 0 12 24"><path d="M0 0l12 12L0 24z" fill="#727272"/></svg>
<div class="t" style="left:162.00px;transform-origin:0 0;top:1420.77px;font-size:27px;line-height:33.75px;color:#681da8;transform:scaleX(0.9681);">Memory Optimized M3 Memory</div>
<svg class="r" style="left:541.7px;top:1427px" width="20" height="20" viewBox="1 1 18 18"><path d="M1 1h7v2.2H3.2v13.6h13.6V12H19v7H1z M11 1h8v8h-2.2V4.8L9 12.6 7.4 11l7.8-7.8H11z" fill="#681da8"/></svg>
<div class="r" style="left:156px;top:1452px;width:413.70000000000005px;height:2px;background:#681da8;"></div>
<div class="t" style="left:627.30px;transform-origin:0 0;top:1420.77px;font-size:27px;line-height:33.75px;color:#575757;transform:scaleX(0.9547);">us-central1</div>
<div class="t" style="right:1983.00px;transform-origin:100% 0;top:1420.77px;font-size:27px;line-height:33.75px;color:#575757;transform:scaleX(0.9330);">1 GB</div>
<div class="t" style="left:2803.00px;transform-origin:0 0;top:1420.77px;font-size:27px;line-height:33.75px;color:#681da8;transform:scaleX(0.9598);">View Analysis</div>
<div class="r" style="left:2802px;top:1452px;width:160px;height:2px;background:#681da8;"></div>
<svg class="r" style="left:128px;top:1484px" width="12" height="24" viewBox="0 0 12 24"><path d="M0 0l12 12L0 24z" fill="#727272"/></svg>
<div class="t" style="left:162.00px;transform-origin:0 0;top:1489.77px;font-size:27px;line-height:33.75px;color:#3367d6;transform:scaleX(0.9244);">NVIDIA A100 40GB GPU</div>
<svg class="r" style="left:454.7px;top:1496px" width="20" height="20" viewBox="1 1 18 18"><path d="M1 1h7v2.2H3.2v13.6h13.6V12H19v7H1z M11 1h8v8h-2.2V4.8L9 12.6 7.4 11l7.8-7.8H11z" fill="#3367d6"/></svg>
<div class="r" style="left:156px;top:1521px;width:326.7px;height:2px;background:#3367d6;"></div>
<div class="t" style="left:627.30px;transform-origin:0 0;top:1489.77px;font-size:27px;line-height:33.75px;color:#575757;transform:scaleX(0.9547);">us-central1</div>
<div class="t" style="right:1983.00px;transform-origin:100% 0;top:1489.77px;font-size:27px;line-height:33.75px;color:#575757;transform:scaleX(0.9330);">1 GPUs</div>
<div class="t" style="left:2803.00px;transform-origin:0 0;top:1489.77px;font-size:27px;line-height:33.75px;color:#3367d6;transform:scaleX(0.9598);">View Analysis</div>
<div class="r" style="left:2802px;top:1521px;width:160px;height:2px;background:#3367d6;"></div>
<svg class="r" style="left:128px;top:1553px" width="12" height="24" viewBox="0 0 12 24"><path d="M0 0l12 12L0 24z" fill="#727272"/></svg>
<div class="t" style="left:162.00px;transform-origin:0 0;top:1558.77px;font-size:27px;line-height:33.75px;color:#3367d6;transform:scaleX(0.9298);">NVIDIA Tesla K80 GPU</div>
<svg class="r" style="left:437.7px;top:1565px" width="20" height="20" viewBox="1 1 18 18"><path d="M1 1h7v2.2H3.2v13.6h13.6V12H19v7H1z M11 1h8v8h-2.2V4.8L9 12.6 7.4 11l7.8-7.8H11z" fill="#3367d6"/></svg>
<div class="r" style="left:156px;top:1590px;width:309.7px;height:2px;background:#3367d6;"></div>
<div class="t" style="left:627.30px;transform-origin:0 0;top:1558.77px;font-size:27px;line-height:33.75px;color:#575757;transform:scaleX(0.9547);">us-central1</div>
<div class="t" style="right:1983.00px;transform-origin:100% 0;top:1558.77px;font-size:27px;line-height:33.75px;color:#575757;transform:scaleX(0.9330);">1 GPUs</div>
<div class="t" style="left:2803.00px;transform-origin:0 0;top:1558.77px;font-size:27px;line-height:33.75px;color:#3367d6;transform:scaleX(0.9598);">View Analysis</div>
<div class="r" style="left:2802px;top:1590px;width:160px;height:2px;background:#3367d6;"></div>
<svg class="r" style="left:128px;top:1622px" width="12" height="24" viewBox="0 0 12 24"><path d="M0 0l12 12L0 24z" fill="#727272"/></svg>
<div class="t" style="left:162.00px;transform-origin:0 0;top:1627.77px;font-size:27px;line-height:33.75px;color:#3367d6;transform:scaleX(0.9278);">NVIDIA Tesla P4 GPU</div>
<svg class="r" style="left:423.2px;top:1634px" width="20" height="20" viewBox="1 1 18 18"><path d="M1 1h7v2.2H3.2v13.6h13.6V12H19v7H1z M11 1h8v8h-2.2V4.8L9 12.6 7.4 11l7.8-7.8H11z" fill="#3367d6"/></svg>
<div class="r" style="left:156px;top:1659px;width:295.2px;height:2px;background:#3367d6;"></div>
<div class="t" style="left:627.30px;transform-origin:0 0;top:1627.77px;font-size:27px;line-height:33.75px;color:#575757;transform:scaleX(0.9547);">us-central1</div>
<div class="t" style="right:1983.00px;transform-origin:100% 0;top:1627.77px;font-size:27px;line-height:33.75px;color:#575757;transform:scaleX(0.9330);">2 GPUs</div>
<div class="t" style="left:2803.00px;transform-origin:0 0;top:1627.77px;font-size:27px;line-height:33.75px;color:#3367d6;transform:scaleX(0.9598);">View Analysis</div>
<div class="r" style="left:2802px;top:1659px;width:160px;height:2px;background:#3367d6;"></div>
<svg class="r" style="left:48px;top:1691px" width="12" height="24" viewBox="0 0 12 24"><path d="M0 0l12 12L0 24z" fill="#727272"/></svg>
<div class="t" style="left:81.50px;transform-origin:0 0;top:1696.77px;font-size:27px;line-height:33.75px;color:#3367d6;transform:scaleX(0.9527);">Cloud Run Committed Use Discounts</div>
<svg class="r" style="left:522.7px;top:1703px" width="20" height="20" viewBox="1 1 18 18"><path d="M1 1h7v2.2H3.2v13.6h13.6V12H19v7H1z M11 1h8v8h-2.2V4.8L9 12.6 7.4 11l7.8-7.8H11z" fill="#3367d6"/></svg>
<div class="r" style="left:76px;top:1728px;width:474.70000000000005px;height:2px;background:#3367d6;"></div>
<div class="t" style="left:627.30px;transform-origin:0 0;top:1696.77px;font-size:27px;line-height:33.75px;color:#575757;transform:scaleX(0.9547);">us-central1</div>
<div class="t" style="right:1984.00px;transform-origin:100% 0;top:1696.77px;font-size:27px;line-height:33.75px;color:#575757;transform:scaleX(1.0044);">$0.05/hr</div>
<div class="t" style="right:1214.00px;transform-origin:100% 0;top:1696.77px;font-size:27px;line-height:33.75px;color:#575757;transform:scaleX(0.9688);">$29.88</div>
<div class="t" style="right:991.00px;transform-origin:100% 0;top:1696.77px;font-size:27px;line-height:33.75px;color:#575757;transform:scaleX(0.9330);">$2.06</div>
<div class="r" style="left:2097px;top:1706px;width:360px;height:16px;border-radius:8px;background:#dedede;overflow:hidden"><div class="r" style="left:0;top:0;width:319px;height:16px;background:#00bda5"></div><div class="r" style="left:88px;top:0;width:2px;height:16px;background:#fff"></div><div class="r" style="left:179px;top:0;width:2px;height:16px;background:#fff"></div><div class="r" style="left:269px;top:0;width:2px;height:16px;background:#fff"></div></div>
<div class="t" style="left:2481.00px;transform-origin:0 0;top:1696.77px;font-size:27px;line-height:33.75px;color:#575757;transform:scaleX(0.9020);">88.72%</div>
<div class="r" style="left:2600px;top:1683px;width:170px;height:80px;overflow:hidden">
<div class="t" style="left:118.00px;transform-origin:0 0;top:13.77px;font-size:27px;line-height:33.75px;color:#575757;transform:scaleX(0.9710);">72.58%</div>
</div>
<div class="t" style="left:2803.00px;transform-origin:0 0;top:1696.77px;font-size:27px;line-height:33.75px;color:#3367d6;transform:scaleX(0.9598);">View Analysis</div>
<div class="r" style="left:2802px;top:1728px;width:160px;height:2px;background:#3367d6;"></div>
<svg class="r" style="left:48px;top:1781px" width="12" height="24" viewBox="0 0 12 24"><path d="M0 0l12 12L0 24z" fill="#727272"/></svg>
<div class="t" style="left:81.50px;transform-origin:0 0;top:1786.77px;font-size:27px;line-height:33.75px;color:#3367d6;transform:scaleX(0.9353);">Cloud SQL Database VM</div>
<svg class="r" style="left:379.3px;top:1793px" width="20" height="20" viewBox="1 1 18 18"><path d="M1 1h7v2.2H3.2v13.6h13.6V12H19v7H1z M11 1h8v8h-2.2V4.8L9 12.6 7.4 11l7.8-7.8H11z" fill="#3367d6"/></svg>
<div class="r" style="left:76px;top:1818px;width:331.3px;height:2px;background:#3367d6;"></div>
<div class="t" style="left:627.30px;transform-origin:0 0;top:1786.77px;font-size:27px;line-height:33.75px;color:#575757;transform:scaleX(0.9598);">europe-west1</div>
<div class="t" style="right:1984.00px;transform-origin:100% 0;top:1786.77px;font-size:27px;line-height:33.75px;color:#575757;transform:scaleX(1.0044);">$0.13/hr</div>
<div class="t" style="right:1214.00px;transform-origin:100% 0;top:1786.77px;font-size:27px;line-height:33.75px;color:#575757;transform:scaleX(0.9688);">$44.93</div>
<div class="t" style="right:991.00px;transform-origin:100% 0;top:1786.77px;font-size:27px;line-height:33.75px;color:#575757;transform:scaleX(0.9330);">$48.67</div>
<div class="r" style="left:2097px;top:1796px;width:360px;height:16px;border-radius:8px;background:#dedede;overflow:hidden"><div class="r" style="left:0;top:0;width:360px;height:16px;background:#00bda5"></div><div class="r" style="left:88px;top:0;width:2px;height:16px;background:#fff"></div><div class="r" style="left:179px;top:0;width:2px;height:16px;background:#fff"></div><div class="r" style="left:269px;top:0;width:2px;height:16px;background:#fff"></div></div>
<div class="t" style="left:2481.00px;transform-origin:0 0;top:1786.77px;font-size:27px;line-height:33.75px;color:#575757;transform:scaleX(0.9020);">100.00%</div>
<div class="r" style="left:2600px;top:1773px;width:170px;height:80px;overflow:hidden">
<div class="t" style="left:118.00px;transform-origin:0 0;top:13.77px;font-size:27px;line-height:33.75px;color:#575757;transform:scaleX(0.9710);">96.21%</div>
</div>
<div class="t" style="left:2803.00px;transform-origin:0 0;top:1786.77px;font-size:27px;line-height:33.75px;color:#3367d6;transform:scaleX(0.9598);">View Analysis</div>
<div class="r" style="left:2802px;top:1818px;width:160px;height:2px;background:#3367d6;"></div>
<div class="r" style="left:815px;top:300px;width:2px;height:1566px;background:#e0e0e0;"></div>
<div class="r" style="left:2770px;top:300px;width:2px;height:1566px;background:#e0e0e0;"></div>
<div class="r" style="left:3006px;top:98px;width:18px;height:1598px;background:#cbcbcb;box-sizing:border-box;border:2px solid #b0b0b0;border-right:none"></div>
</div></body></html>
